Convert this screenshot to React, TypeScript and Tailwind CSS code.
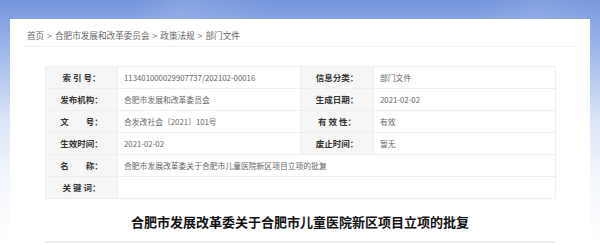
import React from "react";

const font = { fontFamily: '"Noto Sans CJK SC", "Noto Sans", sans-serif' };

function Label({ children }: { children: React.ReactNode }) {
  return (
    <td className="w-[72px] h-[22px] border border-[#eeeeee] bg-[#f6f6f6] text-center text-[8.5px] font-bold text-[#333] whitespace-pre p-0 align-middle">
      {children}
    </td>
  );
}

function Value({ children, span }: { children?: React.ReactNode; span?: number }) {
  return (
    <td
      colSpan={span}
      className="h-[22px] border border-[#eeeeee] bg-white pl-[6px] text-left text-[7.8px] text-[#666] whitespace-nowrap p-0 align-middle"
    >
      {children}
    </td>
  );
}

function Sep() {
  return <span className="mx-[3px] text-[#777]">&gt;</span>;
}

export default function App() {
  return (
    <div
      className="relative w-[600px] h-[245px] overflow-hidden bg-[linear-gradient(180deg,#7495dc_0px,#86a4e4_20px,#a6bdec_60px,#dbe5f7_120px,#f4f7fc_180px,#ffffff_245px)]"
      style={font}
    >
      <div className="absolute inset-x-0 top-0 h-[60px] bg-[linear-gradient(120deg,transparent_0px,transparent_120px,rgba(255,255,255,0.12)_160px,transparent_240px,transparent_420px,rgba(255,255,255,0.1)_470px,transparent_540px)]" />
      <div className="relative ml-[10px] mt-[19px] w-[580px] h-[226px] bg-white">
        <div className="mx-[13px] h-[28px] border-b border-[#f0f0f0] pl-[4px] pt-[10px] text-[8.6px] leading-[12px] text-[#666]">
          首页<Sep />合肥市发展和改革委员会<Sep />政策法规<Sep />部门文件
        </div>
        <div className="mx-[35px] mt-[19px]">
          <table className="w-[510px] border-collapse table-fixed">
            <colgroup>
              <col className="w-[72px]" />
              <col className="w-[183px]" />
              <col className="w-[73px]" />
              <col className="w-[182px]" />
            </colgroup>
            <tbody>
              <tr>
                <Label>索 引 号：</Label>
                <Value>113401000029907737/202102-00016</Value>
                <Label>信息分类：</Label>
                <Value>部门文件</Value>
              </tr>
              <tr>
                <Label>发布机构：</Label>
                <Value>合肥市发展和改革委员会</Value>
                <Label>生成日期：</Label>
                <Value>2021-02-02</Value>
              </tr>
              <tr>
                <Label>文　　号：</Label>
                <Value>合发改社会〔2021〕101号</Value>
                <Label>有 效 性：</Label>
                <Value>有效</Value>
              </tr>
              <tr>
                <Label>生效时间：</Label>
                <Value>2021-02-02</Value>
                <Label>废止时间：</Label>
                <Value>暂无</Value>
              </tr>
              <tr>
                <Label>名　　称：</Label>
                <Value span={3}>合肥市发展改革委关于合肥市儿童医院新区项目立项的批复</Value>
              </tr>
              <tr>
                <Label>关 键 词：</Label>
                <Value span={3}></Value>
              </tr>
            </tbody>
          </table>
          <div className="mt-[14px] h-[30px] border-b-2 border-[#eeeeee] text-center text-[13px] font-bold leading-[18px] text-[#111]">
            合肥市发展改革委关于合肥市儿童医院新区项目立项的批复
          </div>
        </div>
      </div>
    </div>
  );
}
